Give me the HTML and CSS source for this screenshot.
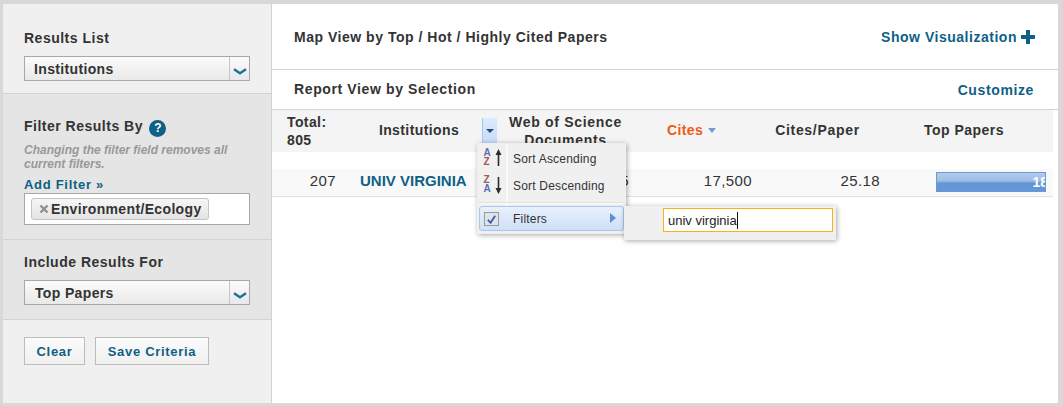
FILE: index.html
```html
<!DOCTYPE html>
<html lang="en">
<head>
    <meta charset="UTF-8">
    <title>Results</title>
    <link rel="stylesheet" href="styles.css">
</head>
<body>
    <div class="frame">
        <aside class="sidebar">
            <section class="side-block block-list">
                <h3>Results List</h3>
                <div class="select"><span>Institutions</span><i class="select-btn"><svg width="14" height="7" viewBox="0 0 14 7"><path d="M1 1.200 L7 5.200 L13 1.200" fill="none" stroke="#1f6f9f" stroke-width="2.400"/></svg></i></div>
            </section>
            <section class="side-block block-filter">
                <h3>Filter Results By <b class="help">?</b></h3>
                <p class="hint">Changing the filter field removes all current filters.</p>
                <a class="add-filter">Add Filter »</a>
                <div class="filter-box"><span class="tag"><svg width="10" height="10" viewBox="0 0 10 10"><path d="M1.500 1.500 L8.500 8.500 M8.500 1.500 L1.500 8.500" stroke="#8f8f8f" stroke-width="2.400"/></svg>Environment/Ecology</span></div>
            </section>
            <section class="side-block block-include">
                <h3>Include Results For</h3>
                <div class="select select-top"><span>Top Papers</span><i class="select-btn"><svg width="14" height="7" viewBox="0 0 14 7"><path d="M1 1.200 L7 5.200 L13 1.200" fill="none" stroke="#1f6f9f" stroke-width="2.400"/></svg></i></div>
            </section>
            <section class="side-block block-actions">
                <button class="btn-clear">Clear</button>
                <button class="btn-save">Save Criteria</button>
            </section>
        </aside>

        <main class="content">
            <div class="bar bar-map">
                <strong>Map View by Top / Hot / Highly Cited Papers</strong>
                <a class="link">Show Visualization<svg width="14" height="14" viewBox="0 0 14 14"><path d="M0 5 H5 V0 H9 V5 H14 V9 H9 V14 H5 V9 H0 Z" fill="#0f5f86"/></svg></a>
            </div>
            <div class="bar bar-report">
                <strong>Report View by Selection</strong>
                <a class="link">Customize</a>
            </div>
            <div class="table-wrap">
                <div class="row head">
                    <div class="col c-total">Total:<br>805</div>
                    <div class="col c-inst">Institutions</div>
                    <div class="col c-docs">Web of Science<br>Documents</div>
                    <div class="col c-cites"><span class="sorted">Cites</span><i class="sort-arrow"></i></div>
                    <div class="col c-ratio">Cites/Paper</div>
                    <div class="col c-top">Top Papers</div>
                </div>
                <div class="row data">
                    <div class="col c-total">207</div>
                    <div class="col c-inst"><a>UNIV VIRGINIA</a></div>
                    <div class="col c-docs">695</div>
                    <div class="col c-cites">17,500</div>
                    <div class="col c-ratio">25.18</div>
                    <div class="col c-top"><div class="bar-chart"><span>18</span></div></div>
                </div>

                <div class="col-menu-btn"><i></i></div>
                <div class="menu">
                    <div class="menu-item">
                        <svg class="sort-icon" width="20" height="20" viewBox="0 0 20 20"><text x="0.500" y="7.500" class="az-a">A</text><text x="0.500" y="17" class="az-z">Z</text><path d="M15.500 1 L18.500 7 H16.300 V18 H14.700 V7 H12.500 Z" fill="#2b2b33"/></svg>
                        Sort Ascending
                    </div>
                    <div class="menu-item">
                        <svg class="sort-icon" width="20" height="20" viewBox="0 0 20 20"><text x="0.500" y="7.500" class="az-z">Z</text><text x="0.500" y="17" class="az-a">A</text><path d="M15.500 19 L18.500 13 H16.300 V2 H14.700 V13 H12.500 Z" fill="#2b2b33"/></svg>
                        Sort Descending
                    </div>
                    <div class="menu-sep"></div>
                    <div class="menu-item active">
                        <span class="check"><svg width="11" height="11" viewBox="0 0 12 12"><path d="M2 6.500 L5 9.500 L10 2" fill="none" stroke="#3a5fa8" stroke-width="2"/></svg></span>
                        Filters
                        <i class="menu-arrow"></i>
                    </div>
                </div>
                <div class="submenu"><div class="filter-input">univ virginia<i class="caret"></i></div></div>
            </div>
        </main>
    </div>
</body>
</html>
```
FILE: styles.css
```css
:root {
    --link-color: #0f5f86;
    --text-color: #333;
    --line-color: #d2d2d2;
    --frame-color: #d8d8d8;
}

* {
    box-sizing: border-box;
}

html, body {
    margin: 0;
    height: 406px;
    overflow: hidden;
}

body {
    font-family: "Liberation Sans", Arial, sans-serif;
    color: var(--text-color);
    background: var(--frame-color);
}

.frame {
    display: flex;
    height: 406px;
    padding: 4px 5px 3px 3px;
}

/* sidebar */
.sidebar {
    width: 269px;
    flex: none;
    display: flex;
    flex-direction: column;
    border-right: 1px solid var(--line-color);
    background: #f0f0f0;
}

.side-block {
    padding: 0 21px;
    border-bottom: 1px solid var(--line-color);
}

.side-block h3 {
    margin: 0;
    font-size: 14px;
    line-height: 18px;
    letter-spacing: 0.5px;
    font-weight: bold;
}

.block-list {
    height: 90px;
    padding-top: 25px;
}

.block-filter {
    height: 146px;
    padding-top: 23px;
    background: #e5e5e5;
}

.block-include {
    height: 80px;
    padding-top: 13px;
    background: #e5e5e5;
}

.block-actions {
    flex: 1;
    display: flex;
    align-items: flex-start;
    gap: 10px;
    padding-top: 17px;
    border-bottom: 0;
}

.select {
    display: flex;
    justify-content: space-between;
    height: 25px;
    margin-top: 9px;
    padding-left: 9px;
    border: 1px solid #a8a8a8;
    background: linear-gradient(#fbfbfb, #e9e9e9);
    font-size: 14px;
    line-height: 25px;
    letter-spacing: 0.35px;
    font-weight: bold;
}

.select-top {
    padding-left: 10px;
}

.select-btn {
    width: 20px;
    display: flex;
    align-items: center;
    justify-content: center;
    padding-top: 6px;
    border-left: 1px solid #c6c6c6;
}

.help {
    display: inline-block;
    width: 17px;
    height: 17px;
    margin-left: 2px;
    border-radius: 50%;
    background: var(--link-color);
    color: white;
    font-size: 12px;
    line-height: 17px;
    letter-spacing: 0;
    text-align: center;
    vertical-align: -1px;
}

.hint {
    margin: 6px 0 0;
    color: #999;
    font-size: 12px;
    line-height: 14px;
    font-style: italic;
    font-weight: bold;
}

.add-filter {
    display: block;
    margin-top: 5px;
    color: var(--link-color);
    font-size: 13px;
    line-height: 17px;
    letter-spacing: 0.7px;
    font-weight: bold;
}

.filter-box {
    height: 32px;
    padding: 4px 6px;
    border: 1px solid #a8a8a8;
    background: white;
}

.tag {
    display: inline-flex;
    align-items: center;
    gap: 2px;
    height: 22px;
    padding: 0 6px 0 7px;
    border: 1px solid #c4c4c4;
    border-radius: 3px;
    background: linear-gradient(#f6f6f6, #e4e4e4);
    font-size: 14px;
    letter-spacing: 0.35px;
    font-weight: bold;
}

button {
    height: 28px;
    padding: 0;
    border: 1px solid #bcbcbc;
    background: linear-gradient(#fbfbfb, #f0f0f0);
    color: var(--link-color);
    font-family: inherit;
    font-size: 13px;
    letter-spacing: 0.7px;
    font-weight: bold;
}

.btn-clear {
    width: 61px;
}

.btn-save {
    width: 114px;
}

/* main area */
.content {
    flex: 1;
    background: white;
}

.bar {
    display: flex;
    align-items: center;
    justify-content: space-between;
    padding: 0 23px 0 22px;
    border-bottom: 1px solid var(--line-color);
    font-size: 14px;
    letter-spacing: 0.52px;
}

.bar-map {
    height: 66px;
}

.bar-report {
    height: 40px;
    padding-right: 24px;
    letter-spacing: 0.62px;
}

.bar-report strong {
    margin-bottom: 2px;
}

.link {
    display: flex;
    align-items: center;
    gap: 4px;
    color: var(--link-color);
    font-weight: bold;
}

.table-wrap {
    position: relative;
    padding-right: 5px;
}

.row {
    display: flex;
}

.col {
    flex: none;
    text-align: center;
}

.head {
    height: 42px;
    background: #f4f4f4;
    font-size: 14px;
    line-height: 18px;
    letter-spacing: 0.7px;
    font-weight: bold;
}

.head .col {
    padding-top: 11px;
}

.head .c-total {
    padding-top: 3px;
    padding-left: 15px;
    text-align: left;
    letter-spacing: 0.4px;
}

.head .c-docs {
    padding-top: 3px;
}

.head .c-inst {
    letter-spacing: 0.4px;
}

.head .c-top {
    letter-spacing: 0.5px;
}

.c-total {
    width: 72px;
}

.c-inst {
    width: 150px;
}

.c-docs {
    width: 143px;
}

.c-cites {
    width: 109px;
}

.c-ratio {
    width: 143px;
}

.c-top {
    width: 150px;
}

.sorted {
    color: #f05a16;
    letter-spacing: 0.4px;
}

.sort-arrow {
    display: inline-block;
    margin-left: 5px;
    border-left: 4px solid transparent;
    border-right: 4px solid transparent;
    border-top: 5px solid #6f9fd0;
    vertical-align: 2px;
}

.data {
    height: 28px;
    margin-top: 17px;
    background: #f9f9f9;
    border-bottom: 1px solid #e2e2e2;
    font-size: 15px;
    line-height: 24px;
    letter-spacing: 0.4px;
}

.data .c-total {
    text-align: right;
    padding-right: 8px;
}

.data .c-inst {
    width: 134px;
    text-align: left;
    padding-left: 16px;
    letter-spacing: 0;
}

.data .c-inst a {
    color: var(--link-color);
    font-weight: bold;
}

.data .c-docs {
    width: 170px;
    padding-right: 19px;
    text-align: right;
}

.data .c-cites {
    width: 104px;
    text-align: right;
}

.data .c-ratio {
    width: 128px;
    text-align: right;
}

.data .c-top {
    flex: 1;
}

.bar-chart {
    width: 110px;
    height: 20px;
    margin: 3px 0 0 56px;
    overflow: hidden;
    border: 1px solid #6a9ad6;
    background: linear-gradient(#b4cbea 0, #9dbce4 45%, #6497d6 55%, #6497d6 100%);
    color: white;
    font-size: 14px;
    font-weight: bold;
    line-height: 18px;
    letter-spacing: 0;
    text-align: right;
    white-space: nowrap;
}

.bar-chart span {
    margin-right: -3px;
}

/* column menu */
.col-menu-btn {
    position: absolute;
    left: 210px;
    top: 8px;
    width: 15px;
    height: 26px;
    padding-top: 11px;
    border-left: 1px solid #a9c7ee;
    background: linear-gradient(#dcebff, #c6dcf8);
}

.col-menu-btn i {
    display: block;
    width: 0;
    margin: 0 auto;
    border-left: 4px solid transparent;
    border-right: 4px solid transparent;
    border-top: 4px solid #2b4a78;
}

.menu {
    position: absolute;
    left: 205px;
    top: 33px;
    width: 149px;
    height: 91px;
    padding: 2px;
    background: #f0f0f0;
    box-shadow: 1px 1px 5px rgba(0, 0, 0, 0.35);
    font-size: 12px;
    letter-spacing: 0.2px;
    color: #333;
}

.menu::before {
    content: "";
    position: absolute;
    left: 29px;
    top: 2px;
    bottom: 2px;
    width: 2px;
    background: #fafafa;
}

.menu-item {
    position: relative;
    display: flex;
    align-items: center;
    height: 27px;
    padding-left: 34px;
}

.sort-icon {
    position: absolute;
    left: 4px;
    top: 3px;
}

.az-a, .az-z {
    font-family: "Liberation Sans", sans-serif;
    font-size: 10px;
    font-weight: bold;
}

.az-a {
    fill: #5a70b0;
}

.az-z {
    fill: #a05a5a;
}

.menu-sep {
    position: relative;
    height: 2px;
    margin: 3px 0 2px 0;
    background: #e0e0e0;
    border-bottom: 1px solid #fafafa;
}

.menu-item.active {
    height: 25px;
    border: 1px solid #a9c7ee;
    border-radius: 3px;
    background: linear-gradient(#e8f1fc, #cfe0f7);
    padding-left: 33px;
}

.check {
    position: absolute;
    left: 4px;
    top: 5px;
    width: 15px;
    height: 14px;
    padding: 1px;
    border: 1px solid #9a9a9a;
    background: #dfe3ea;
}

.check svg {
    display: block;
}

.menu-arrow {
    position: absolute;
    right: 7px;
    top: 6px;
    border-top: 5px solid transparent;
    border-bottom: 5px solid transparent;
    border-left: 6px solid #5a8fd8;
}

.submenu {
    position: absolute;
    left: 352px;
    top: 96px;
    width: 212px;
    height: 34px;
    padding: 2px 0 0 39px;
    background: #f0f0f0;
    box-shadow: 1px 1px 5px rgba(0, 0, 0, 0.35);
}

.filter-input {
    display: flex;
    align-items: center;
    width: 170px;
    height: 24px;
    padding: 1px 0 0 4px;
    border: 1px solid #f5b21a;
    background: white;
    color: #222;
    font-size: 13px;
}

.caret {
    width: 1px;
    height: 17px;
    background: #111;
}
```
